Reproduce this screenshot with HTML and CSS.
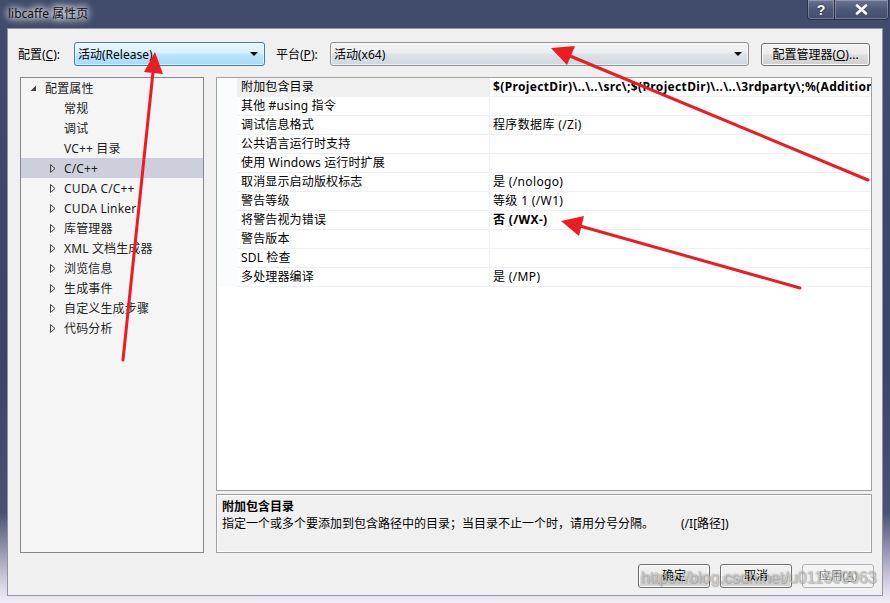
FILE: index.html
```html
<!DOCTYPE html>
<html lang="zh-CN">
<head>
<meta charset="utf-8">
<title>libcaffe 属性页</title>
<link rel="stylesheet" href="styles.css">
</head>
<body>
<div class="window">
  <div class="titlebar">
    <span class="title">libcaffe 属性页</span>
    <div class="caption-btns">
      <span class="cbtn help">?</span>
      <span class="cbtn close">
        <svg width="13" height="11" viewBox="0 0 13 11"><path d="M2 1.5 L11 9.5 M11 1.5 L2 9.5" stroke="#fff" stroke-width="2.6" stroke-linecap="round"/></svg>
      </span>
    </div>
  </div>
  <div class="client">
    <div class="toolbar">
      <span class="lbl lbl-cfg">配置(<u>C</u>):</span>
      <div class="combo combo-cfg focus"><span class="combo-text">活动(Release)</span><span class="drop"></span></div>
      <span class="lbl lbl-plat">平台(<u>P</u>):</span>
      <div class="combo combo-plat"><span class="combo-text">活动(x64)</span><span class="drop"></span></div>
      <div class="btn btn-mgr">配置管理器(<u>O</u>)...</div>
    </div>
    <div class="main">
      <div class="tree">
        <div class="ti lvl0"><span class="exp"><svg width="7" height="7" viewBox="0 0 7 7"><polygon points="6,0.5 6,6 0.5,6" fill="#404040"/></svg></span><span>配置属性</span></div>
        <div class="ti lvl1"><span class="exp"></span><span>常规</span></div>
        <div class="ti lvl1"><span class="exp"></span><span>调试</span></div>
        <div class="ti lvl1"><span class="exp"></span><span>VC++ 目录</span></div>
        <div class="ti lvl1 sel"><span class="exp"><svg width="6" height="9" viewBox="0 0 6 9"><polygon points="0.5,0.5 5,4.5 0.5,8.5" fill="none" stroke="#404040"/></svg></span><span>C/C++</span></div>
        <div class="ti lvl1"><span class="exp"><svg width="6" height="9" viewBox="0 0 6 9"><polygon points="0.5,0.5 5,4.5 0.5,8.5" fill="none" stroke="#404040"/></svg></span><span>CUDA C/C++</span></div>
        <div class="ti lvl1"><span class="exp"><svg width="6" height="9" viewBox="0 0 6 9"><polygon points="0.5,0.5 5,4.5 0.5,8.5" fill="none" stroke="#404040"/></svg></span><span>CUDA Linker</span></div>
        <div class="ti lvl1"><span class="exp"><svg width="6" height="9" viewBox="0 0 6 9"><polygon points="0.5,0.5 5,4.5 0.5,8.5" fill="none" stroke="#404040"/></svg></span><span>库管理器</span></div>
        <div class="ti lvl1"><span class="exp"><svg width="6" height="9" viewBox="0 0 6 9"><polygon points="0.5,0.5 5,4.5 0.5,8.5" fill="none" stroke="#404040"/></svg></span><span>XML 文档生成器</span></div>
        <div class="ti lvl1"><span class="exp"><svg width="6" height="9" viewBox="0 0 6 9"><polygon points="0.5,0.5 5,4.5 0.5,8.5" fill="none" stroke="#404040"/></svg></span><span>浏览信息</span></div>
        <div class="ti lvl1"><span class="exp"><svg width="6" height="9" viewBox="0 0 6 9"><polygon points="0.5,0.5 5,4.5 0.5,8.5" fill="none" stroke="#404040"/></svg></span><span>生成事件</span></div>
        <div class="ti lvl1"><span class="exp"><svg width="6" height="9" viewBox="0 0 6 9"><polygon points="0.5,0.5 5,4.5 0.5,8.5" fill="none" stroke="#404040"/></svg></span><span>自定义生成步骤</span></div>
        <div class="ti lvl1"><span class="exp"><svg width="6" height="9" viewBox="0 0 6 9"><polygon points="0.5,0.5 5,4.5 0.5,8.5" fill="none" stroke="#404040"/></svg></span><span>代码分析</span></div>
      </div>
      <div class="right">
        <div class="grid">
          <div class="row first"><span class="gutter"></span><span class="name">附加包含目录</span><span class="val bold">$(ProjectDir)\..\..\src\;$(ProjectDir)\..\..\3rdparty\;%(AdditionalIncludeDirectories)</span></div>
          <div class="row"><span class="gutter"></span><span class="name">其他 #using 指令</span><span class="val"></span></div>
          <div class="row"><span class="gutter"></span><span class="name">调试信息格式</span><span class="val">程序数据库 (/Zi)</span></div>
          <div class="row"><span class="gutter"></span><span class="name">公共语言运行时支持</span><span class="val"></span></div>
          <div class="row"><span class="gutter"></span><span class="name">使用 Windows 运行时扩展</span><span class="val"></span></div>
          <div class="row"><span class="gutter"></span><span class="name">取消显示启动版权标志</span><span class="val">是 (/nologo)</span></div>
          <div class="row"><span class="gutter"></span><span class="name">警告等级</span><span class="val">等级 1 (/W1)</span></div>
          <div class="row"><span class="gutter"></span><span class="name">将警告视为错误</span><span class="val bold">否 (/WX-)</span></div>
          <div class="row"><span class="gutter"></span><span class="name">警告版本</span><span class="val"></span></div>
          <div class="row"><span class="gutter"></span><span class="name">SDL 检查</span><span class="val"></span></div>
          <div class="row"><span class="gutter"></span><span class="name">多处理器编译</span><span class="val">是 (/MP)</span></div>
        </div>
        <div class="desc">
          <div class="desc-title">附加包含目录</div>
          <div class="desc-text">指定一个或多个要添加到包含路径中的目录；当目录不止一个时，请用分号分隔。<span class="desc-sw">(/I[路径])</span></div>
        </div>
      </div>
    </div>
    <div class="footer">
      <div class="btn">确定</div>
      <div class="btn">取消</div>
      <div class="btn disabled">应用(<u>A</u>)</div>
    </div>
  </div>
  <div class="watermark">https://blog.csdn.net/u011609063</div>
  <svg class="arrows" width="890" height="603" viewBox="0 0 890 603">
    <g stroke="#ec1c24" stroke-width="3" stroke-linecap="round" fill="none">
      <line x1="123" y1="360" x2="153" y2="72"/>
      <line x1="868" y1="180" x2="570" y2="56"/>
      <line x1="800" y1="288" x2="580" y2="226"/>
    </g>
    <g fill="#ec1c24">
      <polygon points="155,52 163,74 144,72"/>
      <polygon points="551,48 575,46 567,65"/>
      <polygon points="561,221 584,216 579,236"/>
    </g>
  </svg>
</div>
</body>
</html>
```

FILE: styles.css
```css
* {
  box-sizing: border-box;
}

html,
body {
  margin: 0;
  padding: 0;
}

body {
  width: 890px;
  height: 603px;
  overflow: hidden;
  font-family: "Noto Sans", "Noto Sans CJK SC", sans-serif;
  font-size: 12px;
  color: #000;
  background: #3c4666;
}

u {
  text-decoration: underline;
}

.window {
  position: relative;
  width: 890px;
  height: 603px;
  padding: 0 7px 7px 7px;
  display: flex;
  flex-direction: column;
  background: linear-gradient(180deg, #414b6b 0%, #3a4464 60%, #4a5272 85%, #cfcadb 96%, #f1eef5 100%);
}

.titlebar {
  height: 28px;
  flex: 0 0 28px;
  display: flex;
  align-items: flex-start;
  justify-content: space-between;
}

.title {
  margin-top: 6px;
  margin-left: 1px;
  font-family: "Noto Sans", "Noto Sans CJK SC", sans-serif;
  font-size: 12px;
  line-height: 16px;
  color: #111;
  text-shadow: 0 0 6px #fff, 0 0 8px #fff, 0 0 10px rgba(255, 255, 255, 0.9);
}

.caption-btns {
  display: flex;
  margin-right: -6px;
}

.cbtn {
  height: 20px;
  display: flex;
  align-items: center;
  justify-content: center;
  color: #fff;
  font-weight: bold;
  font-size: 14px;
  font-family: "Liberation Sans", sans-serif;
  background: linear-gradient(180deg, #6a7392 0%, #4e5878 50%, #424c6c 100%);
  border: 1px solid #2a3248;
  border-top: none;
  box-shadow: inset 0 0 0 1px rgba(255, 255, 255, 0.25);
  text-shadow: 0 0 2px #222;
}

.cbtn.help {
  width: 28px;
  border-bottom-left-radius: 4px;
}

.cbtn.close {
  width: 54px;
  border-left: none;
  border-bottom-right-radius: 4px;
}

.client {
  flex: 1;
  background: #f0f0f0;
  border: 1px solid #8e94a6;
  display: flex;
  flex-direction: column;
}

.toolbar {
  display: flex;
  align-items: center;
  padding: 13px 0 0 10px;
  height: 37px;
}

.lbl {
  line-height: 24px;
  white-space: nowrap;
  margin-top: 2px;
}

.lbl-cfg {
  width: 56px;
}

.lbl-plat {
  width: 54px;
  margin-left: 11px;
}

.combo {
  position: relative;
  height: 24px;
  border: 1px solid #8f9297;
  border-radius: 3px;
  background: linear-gradient(180deg, #f3f3f3 0%, #ebeef0 45%, #dde3e8 50%, #cfd7de 100%);
  box-shadow: inset 0 0 0 1px rgba(255, 255, 255, 0.6);
  display: flex;
  align-items: center;
  padding-left: 3px;
  padding-top: 1px;
}

.combo.focus {
  border-color: #3c7fb1;
  background: linear-gradient(180deg, #eaf6fd 0%, #d9f0fc 45%, #bee6fd 50%, #a7d9f5 100%);
}

.combo-cfg {
  width: 191px;
}

.combo-plat {
  width: 419px;
}

.combo-text {
  line-height: 16px;
}

.drop {
  position: absolute;
  right: 6px;
  top: 9px;
  width: 0;
  height: 0;
  border-left: 4px solid transparent;
  border-right: 4px solid transparent;
  border-top: 4px solid #000;
}

.btn {
  display: flex;
  align-items: center;
  justify-content: center;
  height: 24px;
  border: 1px solid #707070;
  border-radius: 3px;
  background: linear-gradient(180deg, #f2f2f2 0%, #ebebeb 48%, #dddddd 52%, #cfcfcf 100%);
  box-shadow: inset 0 0 0 1px #fbfbfb;
  line-height: 16px;
  white-space: nowrap;
}

.btn-mgr {
  width: 109px;
  height: 23px;
  margin-left: 12px;
  margin-top: 1px;
}

.main {
  display: flex;
  padding: 11px 10px 0 12px;
  gap: 12px;
}

.tree {
  width: 184px;
  height: 476px;
  background: #f5f5f5;
  border: 1px solid #828790;
}

.ti {
  height: 20px;
  display: flex;
  align-items: center;
  white-space: nowrap;
  color: #1e1e1e;
}

.ti span:last-child {
  letter-spacing: 0.15px;
}

.ti.sel {
  background: #cdd0dc;
}

.exp {
  display: flex;
  align-items: center;
  justify-content: flex-start;
}

.lvl0 {
  padding-left: 9px;
}

.lvl0 .exp {
  width: 15px;
  margin-top: 1px;
}

.lvl1 {
  padding-left: 29px;
}

.lvl1 .exp {
  width: 14px;
}

.right {
  width: 656px;
  display: flex;
  flex-direction: column;
  gap: 3px;
}

.grid {
  height: 414px;
  border: 1px solid #a0a0a0;
  background: #fff;
  overflow: hidden;
}

.row {
  display: flex;
  height: 19px;
}

.gutter {
  width: 20px;
  flex: 0 0 20px;
  background: #fbfcfd;
}

.name {
  width: 252px;
  flex: 0 0 252px;
  padding-left: 4px;
  border-bottom: 1px solid #edf0f5;
  line-height: 18px;
  white-space: nowrap;
  overflow: hidden;
  letter-spacing: 0.15px;
}

.row.first .name {
  background: #f0f0f0;
}

.val {
  flex: 1;
  min-width: 0;
  padding-left: 3px;
  border-left: 1px solid #edf0f5;
  border-bottom: 1px solid #edf0f5;
  line-height: 18px;
  white-space: nowrap;
  overflow: hidden;
  letter-spacing: 0.35px;
}

.bold {
  font-weight: bold;
}

.desc {
  height: 59px;
  border: 1px solid #a0a0a0;
  box-shadow: inset 0 0 0 1px #fcfcfc;
  background: #f0f0f0;
  padding: 3px 5px;
}

.desc-title {
  font-weight: bold;
  line-height: 17px;
}

.desc-text {
  line-height: 17px;
  white-space: nowrap;
}

.desc-sw {
  margin-left: 27px;
}

.footer {
  display: flex;
  justify-content: flex-end;
  gap: 10px;
  padding: 11px 8px 0 0;
}

.footer .btn {
  width: 72px;
}

.btn.disabled {
  color: #8d8d8d;
  border-color: #adb2b5;
  background: #f4f4f4;
  box-shadow: none;
}

.watermark {
  position: absolute;
  left: 641px;
  top: 568px;
  font-family: "Liberation Sans", sans-serif;
  font-size: 16px;
  line-height: 20px;
  color: rgba(255, 255, 255, 0.6);
  text-shadow: 0 0 1px rgba(0, 0, 0, 0.5), 1px 1px 1px rgba(0, 0, 0, 0.2);
  white-space: nowrap;
  pointer-events: none;
}

.arrows {
  position: absolute;
  left: 0;
  top: 0;
  pointer-events: none;
}
```
